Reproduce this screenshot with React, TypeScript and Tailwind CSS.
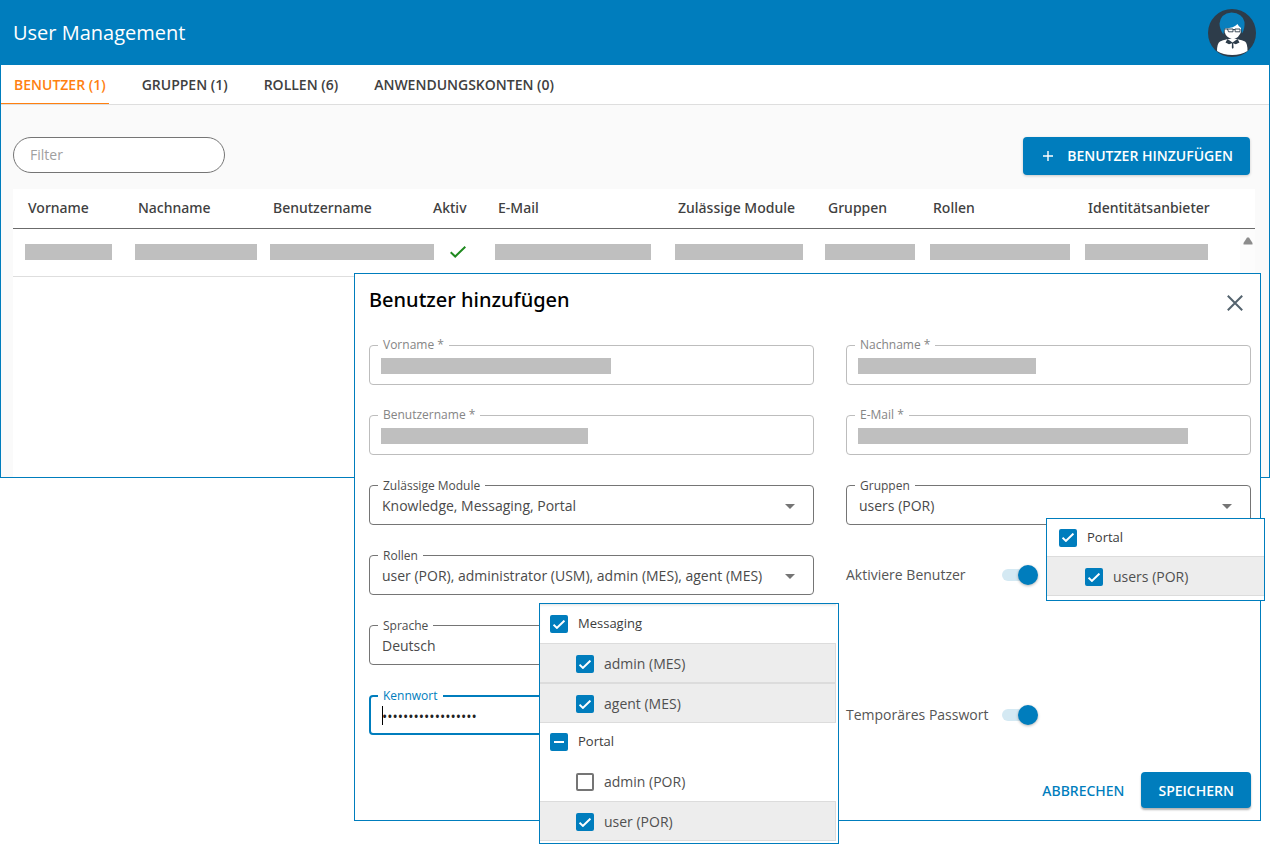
import React from "react";

const tabs = ["BENUTZER (1)", "GRUPPEN (1)", "ROLLEN (6)", "ANWENDUNGSKONTEN (0)"];

const columns = [
  { title: "Vorname", col: "w-[110px]", bar: "w-[87px]" },
  { title: "Nachname", col: "w-[135px]", bar: "w-[122px]" },
  { title: "Benutzername", col: "w-[160px]", bar: "w-[164px]" },
  { title: "Aktiv", col: "w-[65px]", bar: "" },
  { title: "E-Mail", col: "w-[180px]", bar: "w-[156px]" },
  { title: "Zulässige Module", col: "w-[150px]", bar: "w-[128px]" },
  { title: "Gruppen", col: "w-[105px]", bar: "w-[90px]" },
  { title: "Rollen", col: "w-[155px]", bar: "w-[140px]" },
  { title: "Identitätsanbieter", col: "", bar: "w-[123px]" },
];

function Avatar() {
  return (
    <svg viewBox="0 0 48 48" className="size-12" aria-hidden="true">
      <circle cx="24" cy="24" r="24" fill="#2d3c4a" />
      <path d="M9 42 Q9 34.500 12 32.500 Q14 31.300 20 30 L28.500 30 Q35 31.300 37 32.500 Q39.500 34.500 39.500 42 Q33 46 24.300 46 Q15 46 9 42Z" fill="#fff" />
      <path d="M19.500 30 L24.500 33.500 L29.500 30 L31.500 33.500 L27.800 35.200 L25.200 34.200 L25.600 38.500 L24.800 40 L23.800 38.500 L24 34.200 L21 35.200 L17.500 33.500Z" fill="#2d3c4a" />
      <path d="M16.500 18 L31 13 L33 17 V22.500 Q31.500 28.500 25 30.500 Q18 28.500 16.800 23.500Z" fill="#fff" />
      <path d="M15.500 25.500 Q11.500 20 11.500 14.500 Q12.500 4.500 23.500 3.500 Q34.500 4 36.500 13 Q37 20 34 24.500 L33 19 Q30.500 17.500 29.500 15 Q26 19 17 19.500 Q15.500 21 15.500 25.500Z" fill="#087fbd" />
      <path d="M19.500 20 H25 V22.800 H20.500Z M27 20 H32 V22.800 H27.200Z M25 20.500 H27 M16.500 20 H20" fill="none" stroke="#2d3c4a" strokeWidth="0.900" />
    </svg>
  );
}

function Check({ className }: { className: string }) {
  return (
    <svg viewBox="0 0 16 12" className={className} fill="none" stroke="currentColor" strokeWidth="2" aria-hidden="true">
      <path d="M0.700 6.300 L5.200 10.500 L15.300 0.800" />
    </svg>
  );
}

function Field({
  id,
  label,
  tone = "normal",
  children,
}: {
  id: string;
  label: string;
  tone?: "normal" | "muted" | "active";
  children: React.ReactNode;
}) {
  const labelTone =
    tone === "active"
      ? "-top-[7px] text-[#007dbd]"
      : tone === "muted"
        ? "-top-2 text-[#858585]"
        : "-top-[7px] text-[#4d4d4d]";
  return (
    <div className="relative h-10">
      {children}
      <label htmlFor={id} className={`absolute left-[9px] bg-white px-[5px] text-xs leading-4 ${labelTone}`}>
        {label}
      </label>
    </div>
  );
}

function MaskedField({ id, label, bar }: { id: string; label: string; bar: string }) {
  return (
    <Field id={id} label={label} tone="muted">
      <input id={id} type="text" readOnly className="h-full w-full rounded border border-[#bdbdbd] bg-white px-3 text-sm outline-none" />
      <span className={`absolute top-[13px] left-3 h-4 bg-[#bfbfbf] ${bar}`} />
    </Field>
  );
}

function SelectField({ id, label, value }: { id: string; label: string; value: string }) {
  return (
    <Field id={id} label={label}>
      <select
        id={id}
        defaultValue={value}
        className="h-full w-full appearance-none rounded border border-[#757575] bg-white pt-[2px] pr-10 pl-3 text-sm text-[#4a4a4a] outline-none"
      >
        <option>{value}</option>
      </select>
      <svg viewBox="0 0 10 5" className="pointer-events-none absolute top-[19px] right-[19px] h-[5px] w-[10px]" aria-hidden="true">
        <path d="M0 0 H10 L5 5Z" fill="#757575" />
      </svg>
    </Field>
  );
}

function Toggle({ id, label }: { id: string; label: string }) {
  return (
    <div className="flex h-10 items-center text-sm text-[#555]">
      <label htmlFor={id} className="w-[156px]">
        {label}
      </label>
      <input
        id={id}
        type="checkbox"
        role="switch"
        defaultChecked
        className="relative h-5 w-9 appearance-none before:absolute before:top-1 before:left-0 before:h-3 before:w-8 before:rounded-full before:bg-[#d4e9f3] after:absolute after:top-0 after:right-0 after:size-5 after:rounded-full after:bg-[#007dbd] after:shadow-[0_1px_3px_rgba(0,0,0,0.3)]"
      />
    </div>
  );
}

function MenuItem({
  id,
  label,
  state,
  group = false,
  className,
}: {
  id: string;
  label: string;
  state: "on" | "off" | "mixed";
  group?: boolean;
  className: string;
}) {
  return (
    <li className={`flex items-center ${className}`}>
      <span className="relative flex size-[18px] items-center justify-center">
        <input
          id={id}
          type="checkbox"
          defaultChecked={state !== "off"}
          className="absolute inset-0 appearance-none rounded-[2px] border-2 border-[#757575] bg-white checked:border-[#007dbd] checked:bg-[#007dbd]"
        />
        {state === "on" && <Check className="pointer-events-none relative h-[9px] w-3 text-white [stroke-width:2.700]" />}
        {state === "mixed" && <span className="pointer-events-none relative h-[2px] w-[10px] bg-white" />}
      </span>
      <label htmlFor={id} className={`pl-[10px] ${group ? "text-[13px] text-[#3c3c3c]" : "text-sm text-[#505050]"}`}>
        {label}
      </label>
    </li>
  );
}

const selectedRow = "h-10 border-y border-[#dcdcdc] bg-[#ededed] pt-[2px]";

function RolesMenu() {
  return (
    <ul className="absolute top-[329px] left-[184px] w-[300px] border border-[#007dbd] bg-white pr-[2px] pb-[2px]">
      <MenuItem id="r-mes" label="Messaging" state="on" group className="h-[39px] pt-px pl-[10px] shadow-[inset_0_3px_3px_-2px_rgba(0,0,0,0.12)]" />
      <MenuItem id="r-mes-admin" label="admin (MES)" state="on" className={`border-r pl-9 ${selectedRow}`} />
      <MenuItem id="r-mes-agent" label="agent (MES)" state="on" className={`border-r pl-9 ${selectedRow}`} />
      <MenuItem id="r-por" label="Portal" state="mixed" group className="h-[39px] pb-px pl-[10px]" />
      <MenuItem id="r-por-admin" label="admin (POR)" state="off" className="h-[39px] pl-9" />
      <MenuItem id="r-por-user" label="user (POR)" state="on" className={`border-r pl-9 ${selectedRow}`} />
    </ul>
  );
}

function GroupsMenu() {
  return (
    <ul className="absolute top-[244px] -right-[5px] w-[219px] border border-[#007dbd] bg-white pb-1">
      <MenuItem id="g-por" label="Portal" state="on" group className="h-[37px] pl-3" />
      <MenuItem id="g-por-users" label="users (POR)" state="on" className={`pl-[38px] ${selectedRow}`} />
    </ul>
  );
}

function AddUserDialog() {
  return (
    <section
      role="dialog"
      aria-labelledby="dialog-title"
      className="absolute top-[273px] right-[10px] left-[354px] border border-[#007dbd] bg-white pt-3 pr-[9px] pb-3 pl-[14px]"
    >
      <div className="flex items-start justify-between">
        <h2 id="dialog-title" className="font-['Noto_Sans'] text-xl leading-7 font-medium text-black">
          Benutzer hinzufügen
        </h2>
        <button type="button" aria-label="Schließen" className="px-2 pt-[9px]">
          <svg viewBox="0 0 16 16" className="size-4" fill="none" stroke="#54636e" strokeWidth="2" aria-hidden="true">
            <path d="M0.800 0.800 L15.200 15.200 M15.200 0.800 L0.800 15.200" />
          </svg>
        </button>
      </div>
      <form>
        <div className="mt-[31px] grid grid-cols-[445fr_405fr] gap-x-8 gap-y-[30px]">
          <MaskedField id="vorname" label="Vorname *" bar="w-[230px]" />
          <MaskedField id="nachname" label="Nachname *" bar="w-[178px]" />
          <MaskedField id="benutzername" label="Benutzername *" bar="w-[207px]" />
          <MaskedField id="email" label="E-Mail *" bar="w-[330px]" />
          <SelectField id="module" label="Zulässige Module" value="Knowledge, Messaging, Portal" />
          <SelectField id="gruppen" label="Gruppen" value="users (POR)" />
          <SelectField id="rollen" label="Rollen" value="user (POR), administrator (USM), admin (MES), agent (MES)" />
          <Toggle id="aktiv" label="Aktiviere Benutzer" />
          <SelectField id="sprache" label="Sprache" value="Deutsch" />
          <span />
          <Field id="kennwort" label="Kennwort" tone="active">
            <input
              id="kennwort"
              type="password"
              defaultValue="abcdefghijklmnopqr"
              className="h-full w-full rounded border-2 border-[#007dbd] bg-white px-[11px] pt-[2px] text-sm text-[#222] caret-transparent outline-none"
            />
            <span className="absolute top-[11px] left-[13px] h-[19px] w-px bg-black" />
          </Field>
          <Toggle id="temp" label="Temporäres Passwort" />
        </div>
        <div className="mt-[37px] flex justify-end text-sm">
          <button type="button" className="h-9 px-[17px] pt-[2px] font-['Noto_Sans'] font-medium text-[#007dbd]">
            ABBRECHEN
          </button>
          <button type="button" className="h-9 rounded bg-[#007dbd] px-[17px] pt-[2px] font-semibold text-white shadow-[0_2px_2px_rgba(0,0,0,0.3)]">
            SPEICHERN
          </button>
        </div>
      </form>
      <RolesMenu />
      <GroupsMenu />
    </section>
  );
}

export default function App() {
  return (
    <div className="relative min-h-screen bg-white font-['Open_Sans','Noto_Sans',sans-serif]">
      <main className="mr-px flex min-h-[478px] flex-col border border-[#007dbd] bg-[#fafafa]">
        <header className="flex h-16 items-center justify-between bg-[#007dbd] pr-[13px] pl-3">
          <h1 className="text-xl text-white">User Management</h1>
          <Avatar />
        </header>
        <nav className="flex h-10 gap-[33px] border-b border-[#dedede] bg-white text-sm font-semibold text-[#404040]">
          {tabs.map((tab, i) => (
            <a
              key={tab}
              href="#"
              className={`flex items-center pr-[3px] ${i === 0 ? "border-b border-[#ff8010] pt-px pl-[13px] text-[#ff8010]" : ""}`}
            >
              {tab}
            </a>
          ))}
        </nav>
        <div className="flex items-start justify-between pt-8 pr-[19px] pb-[14px] pl-3">
          <input
            type="text"
            aria-label="Filter"
            placeholder="Filter"
            className="h-9 w-[212px] rounded-full border border-[#757575] bg-white px-4 pb-[2px] text-sm outline-none placeholder:text-[#a0a0a0]"
          />
          <button
            type="button"
            className="flex h-[38px] items-center rounded bg-[#007dbd] pr-[17px] pl-5 text-sm font-semibold text-white shadow-[0_1px_3px_rgba(0,0,0,0.2)]"
          >
            <svg viewBox="0 0 10 10" className="mr-[14px] size-[10px]" stroke="currentColor" strokeWidth="1.400" aria-hidden="true">
              <path d="M5 0 V10 M0 5 H10" />
            </svg>
            BENUTZER HINZUFÜGEN
          </button>
        </div>
        <div className="relative mr-[14px] ml-3 flex-1 bg-white">
          <table className="w-full table-fixed border-collapse text-sm text-[#404040]">
            <thead>
              <tr className="h-[39px] border-b border-[#6b6b6b] font-['Noto_Sans']">
                {columns.map((c) => (
                  <th key={c.title} scope="col" className={`px-[15px] text-left font-medium whitespace-nowrap ${c.col}`}>
                    {c.title}
                  </th>
                ))}
              </tr>
            </thead>
            <tbody>
              <tr className="h-12 border-b border-[#dedede]">
                {columns.map((c) => (
                  <td key={c.title} className="px-3">
                    {c.bar ? (
                      <span className={`block h-4 bg-[#bfbfbf] ${c.bar}`} />
                    ) : (
                      <Check className="ml-5 h-3 w-4 text-[#1f8a1f]" />
                    )}
                  </td>
                ))}
              </tr>
            </tbody>
          </table>
          <div className="absolute top-10 right-0 bottom-0 w-[15px] bg-[#fcfcfc] pt-2">
            <svg viewBox="0 0 10 8" className="mx-auto h-2 w-[10px]" aria-hidden="true">
              <path d="M4 0.500 H6 L9.500 6 V7.500 H0.500 V6Z" fill="#8c8c8c" />
            </svg>
          </div>
        </div>
      </main>
      <AddUserDialog />
    </div>
  );
}
